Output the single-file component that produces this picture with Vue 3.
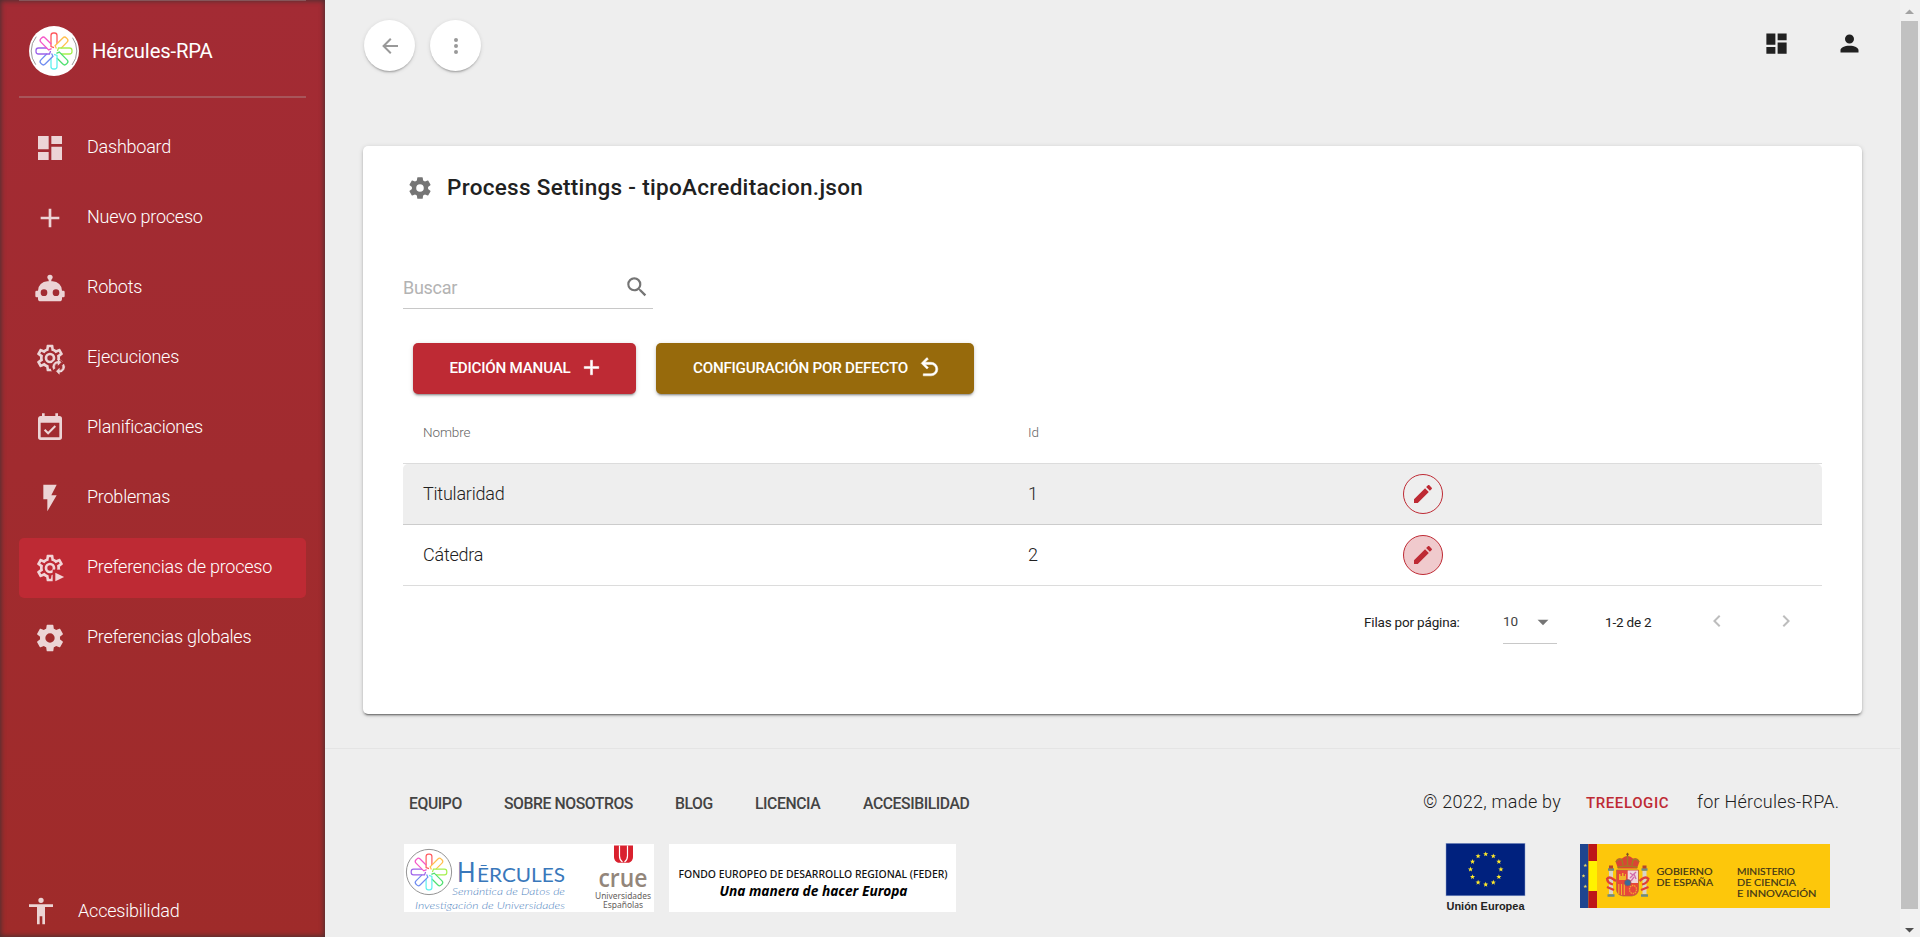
<script setup>
const icons = {
  dashboard: 'M13,3V9H21V3M13,21H21V11H13M3,21H11V15H3M3,13H11V3H3V13Z',
  plus: 'M19,13H13V19H11V13H5V11H11V5H13V11H19V13Z',
  robot: 'M12,2A2,2 0 0,1 14,4C14,4.74 13.6,5.39 13,5.73V7H14A7,7 0 0,1 21,14H22A1,1 0 0,1 23,15V18A1,1 0 0,1 22,19H21V20A2,2 0 0,1 19,22H5A2,2 0 0,1 3,20V19H2A1,1 0 0,1 1,18V15A1,1 0 0,1 2,14H3A7,7 0 0,1 10,7H11V5.73C10.4,5.39 10,4.74 10,4A2,2 0 0,1 12,2M7.5,13A2.5,2.5 0 0,0 5,15.5A2.5,2.5 0 0,0 7.5,18A2.5,2.5 0 0,0 10,15.5A2.5,2.5 0 0,0 7.5,13M16.5,13A2.5,2.5 0 0,0 14,15.5A2.5,2.5 0 0,0 16.5,18A2.5,2.5 0 0,0 19,15.5A2.5,2.5 0 0,0 16.5,13Z',
  cog: 'M12,15.5A3.5,3.5 0 0,1 8.5,12A3.5,3.5 0 0,1 12,8.5A3.5,3.5 0 0,1 15.5,12A3.5,3.5 0 0,1 12,15.5M19.43,12.97C19.47,12.65 19.5,12.33 19.5,12C19.5,11.67 19.47,11.34 19.43,11L21.54,9.37C21.73,9.22 21.78,8.95 21.66,8.73L19.66,5.27C19.54,5.05 19.27,4.96 19.05,5.05L16.56,6.05C16.04,5.66 15.5,5.32 14.87,5.07L14.5,2.42C14.46,2.18 14.25,2 14,2H10C9.75,2 9.54,2.18 9.5,2.42L9.13,5.07C8.5,5.32 7.96,5.66 7.44,6.05L4.95,5.05C4.73,4.96 4.46,5.05 4.34,5.27L2.34,8.73C2.21,8.95 2.27,9.22 2.46,9.37L4.57,11C4.53,11.34 4.5,11.67 4.5,12C4.5,12.33 4.53,12.65 4.57,12.97L2.46,14.63C2.27,14.78 2.21,15.05 2.34,15.27L4.34,18.73C4.46,18.95 4.73,19.03 4.95,18.95L7.44,17.94C7.96,18.34 8.5,18.68 9.13,18.93L9.5,21.58C9.54,21.82 9.75,22 10,22H14C14.25,22 14.46,21.82 14.5,21.58L14.87,18.93C15.5,18.67 16.04,18.34 16.56,17.94L19.05,18.95C19.27,19.03 19.54,18.95 19.66,18.73L21.66,15.27C21.78,15.05 21.73,14.78 21.54,14.63L19.43,12.97Z',
  cogOutline: 'M12,8A4,4 0 0,1 16,12A4,4 0 0,1 12,16A4,4 0 0,1 8,12A4,4 0 0,1 12,8M12,10A2,2 0 0,0 10,12A2,2 0 0,0 12,14A2,2 0 0,0 14,12A2,2 0 0,0 12,10M10,22C9.75,22 9.54,21.82 9.5,21.58L9.13,18.93C8.5,18.68 7.96,18.34 7.44,17.94L4.95,18.95C4.73,19.03 4.46,18.95 4.34,18.73L2.34,15.27C2.21,15.05 2.27,14.78 2.46,14.63L4.57,12.97L4.5,12L4.57,11L2.46,9.37C2.27,9.22 2.21,8.95 2.34,8.73L4.34,5.27C4.46,5.05 4.73,4.96 4.95,5.05L7.44,6.05C7.96,5.66 8.5,5.32 9.13,5.07L9.5,2.42C9.54,2.18 9.75,2 10,2H14C14.25,2 14.46,2.18 14.5,2.42L14.87,5.07C15.5,5.32 16.04,5.66 16.56,6.05L19.05,5.05C19.27,4.96 19.54,5.05 19.66,5.27L21.66,8.73C21.79,8.95 21.73,9.22 21.54,9.37L19.43,11L19.5,12L19.43,13L21.54,14.63C21.73,14.78 21.78,15.05 21.66,15.27L19.66,18.73C19.54,18.95 19.27,19.03 19.05,18.95L16.56,17.94C16.04,18.34 15.5,18.67 14.87,18.93L14.5,21.58C14.46,21.82 14.25,22 14,22H10M11.25,4L10.88,6.61C9.68,6.86 8.62,7.5 7.85,8.39L5.44,7.35L4.69,8.65L6.8,10.2C6.4,11.37 6.4,12.64 6.8,13.8L4.68,15.36L5.43,16.66L7.86,15.62C8.63,16.5 9.68,17.14 10.87,17.38L11.24,20H12.76L13.13,17.39C14.32,17.14 15.37,16.5 16.14,15.62L18.57,16.66L19.32,15.36L17.2,13.81C17.6,12.64 17.6,11.37 17.2,10.2L19.31,8.65L18.56,7.35L16.15,8.39C15.38,7.5 14.32,6.86 13.12,6.62L12.75,4H11.25Z',
  calendar: 'M19,19H5V8H19M19,3H18V1H16V3H8V1H6V3H5C3.89,3 3,3.9 3,5V19A2,2 0 0,0 5,21H19A2,2 0 0,0 21,19V5A2,2 0 0,0 19,3M16.53,11.06L15.47,10L10.59,14.88L8.47,12.76L7.41,13.82L10.59,17L16.53,11.06Z',
  flash: 'M7,2V13H10V22L17,10H13L17,2H7Z',
  human: 'M21,9H15V22H13V16H11V22H9V9H3V7H21M12,2A2,2 0 0,1 14,4A2,2 0 0,1 12,6A2,2 0 0,1 10,4A2,2 0 0,1 12,2Z',
  account: 'M12,4A4,4 0 0,1 16,8A4,4 0 0,1 12,12A4,4 0 0,1 8,8A4,4 0 0,1 12,4M12,14C16.42,14 20,15.79 20,18V20H4V18C4,15.79 7.58,14 12,14Z',
  back: 'M20,11V13H8L13.5,18.5L12.08,19.92L4.16,12L12.08,4.08L13.5,5.5L8,11H20Z',
  dots: 'M12,16A2,2 0 0,1 14,18A2,2 0 0,1 12,20A2,2 0 0,1 10,18A2,2 0 0,1 12,16M12,10A2,2 0 0,1 14,12A2,2 0 0,1 12,14A2,2 0 0,1 10,12A2,2 0 0,1 12,10M12,4A2,2 0 0,1 14,6A2,2 0 0,1 12,8A2,2 0 0,1 10,6A2,2 0 0,1 12,4Z',
  magnify: 'M9.5,3A6.5,6.5 0 0,1 16,9.5C16,11.11 15.41,12.59 14.44,13.73L14.71,14H15.5L20.5,19L19,20.5L14,15.5V14.71L13.73,14.44C12.59,15.41 11.11,16 9.5,16A6.5,6.5 0 0,1 3,9.5A6.5,6.5 0 0,1 9.5,3M9.5,5C7,5 5,7 5,9.5C5,12 7,14 9.5,14C12,14 14,12 14,9.5C14,7 12,5 9.5,5Z',
  undo: 'M13.5,7A6.5,6.5 0 0,1 20,13.5A6.5,6.5 0 0,1 13.5,20H6V18H13.5C16,18 18,16 18,13.5C18,11 16,9 13.5,9H7.83L10.91,12.09L9.5,13.5L4,8L9.5,2.5L10.92,3.91L7.83,7H13.5Z',
  pencil: 'M20.71,7.04C21.1,6.65 21.1,6 20.71,5.63L18.37,3.29C18,2.9 17.35,2.9 16.96,3.29L15.12,5.12L18.87,8.87M3,17.25V21H6.75L17.81,9.93L14.06,6.18L3,17.25Z',
  left: 'M15.41,16.58L10.83,12L15.41,7.41L14,6L8,12L14,18L15.41,16.58Z',
  right: 'M8.59,16.58L13.17,12L8.59,7.41L10,6L16,12L10,18L8.59,16.58Z',
  caret: 'M7,10L12,15L17,10H7Z',
}
const nav = [
  { label: 'Dashboard', icon: 'dashboard' },
  { label: 'Nuevo proceso', icon: 'plus' },
  { label: 'Robots', icon: 'robot' },
  { label: 'Ejecuciones', icon: 'cogOutline', extra: 'sync' },
  { label: 'Planificaciones', icon: 'calendar' },
  { label: 'Problemas', icon: 'flash' },
  { label: 'Preferencias de proceso', icon: 'cogOutline', extra: 'play', active: true },
  { label: 'Preferencias globales', icon: 'cog' },
]
const petals = ['#ff5a5f', '#ffbf4d', '#a5f04e', '#4fe070', '#5ff0ee', '#6f8cf0', '#9d62ea', '#f556c8']
const rows = [
  { name: 'Titularidad', id: 1, hover: true },
  { name: 'Cátedra', id: 2 },
]
const links = [
  ['EQUIPO', 'w1'], ['SOBRE NOSOTROS', 'w2'], ['BLOG', 'w3'], ['LICENCIA', 'w4'], ['ACCESIBILIDAD', 'w5'],
]
const star = (cx, cy, r) => {
  const p = []
  for (let i = 0; i < 10; i++) {
    const q = i % 2 ? r * 0.42 : r
    const a = (i * Math.PI) / 5 - Math.PI / 2
    p.push((cx + q * Math.cos(a)).toFixed(2) + ',' + (cy + q * Math.sin(a)).toFixed(2))
  }
  return p.join(' ')
}
const euStars = Array.from({ length: 12 }, (_, i) => {
  const a = (i * Math.PI) / 6
  return star(39.7 + 15.2 * Math.sin(a), 26.3 - 15.2 * Math.cos(a), 2.7)
})
</script>

<template>
  <div class="page">
    <aside class="sidebar">
      <div class="line top"></div>
      <div class="brand">
        <svg class="logo" viewBox="-25 -25 50 50">
          <circle r="25" fill="#fff" />
          <circle r="22.8" fill="none" stroke="#999" stroke-width="1" stroke-dasharray="30 41.6" stroke-dashoffset="15" />
          <g fill="none" stroke-width="1.3">
            <path v-for="(c, i) in petals" :key="c" :stroke="c" :transform="`rotate(${i * 45})`" d="M3,-7V-15.5Q3,-18 0.5,-18H-0.5Q-3,-18 -3,-15.5V-4.5L0,-3.4" />
          </g>
        </svg>
        <span class="brand-name">Hércules-RPA</span>
      </div>
      <div class="line"></div>
      <nav class="nav">
        <div v-for="n in nav" :key="n.label" class="item" :class="{ active: n.active }">
          <svg class="nav-icon" viewBox="0 0 24 24">
            <mask :id="'cut-' + n.extra">
              <rect width="24" height="24" fill="#fff" />
              <circle v-if="n.extra === 'sync'" cx="18" cy="19" r="5.6" fill="#000" />
              <path v-if="n.extra === 'play'" d="M14,13.2H24V24H14Z" fill="#000" />
            </mask>
            <path :d="icons[n.icon]" :mask="n.extra ? `url(#cut-${n.extra})` : null" />
            <g v-if="n.extra === 'sync'" stroke="currentColor" stroke-width=".35">
              <path d="M18,14.5V13L20.25,15.25L18,17.5V16A2.5,2.5 0 0,0 15.5,18.5C15.5,18.9 15.6,19.3 15.76,19.62L14.67,20.71A4,4 0 0,1 18,14.5Z" />
              <path d="M19,22.7V24.2L16.75,21.95L19,19.7V21.2A2.5,2.5 0 0,0 21.5,18.7C21.5,18.3 21.4,17.9 21.24,17.58L22.33,16.49A4,4 0 0,1 19,22.7Z" />
            </g>
            <path v-if="n.extra === 'play'" d="M16,15.5V22L22.6,18.75Z" />
          </svg>
          <span>{{ n.label }}</span>
        </div>
      </nav>
      <div class="access">
        <svg class="nav-icon" viewBox="0 0 24 24"><path :d="icons.human" /></svg>
        <span>Accesibilidad</span>
      </div>
    </aside>

    <div class="content">
      <header class="toolbar">
        <button class="round"><svg viewBox="0 0 24 24"><path :d="icons.back" /></svg></button>
        <button class="round"><svg viewBox="0 0 24 24"><path :d="icons.dots" /></svg></button>
        <div class="tools">
          <svg viewBox="0 0 24 24"><path :d="icons.dashboard" /></svg>
          <svg viewBox="0 0 24 24"><path :d="icons.account" /></svg>
        </div>
      </header>

      <main class="card">
        <div class="title">
          <svg viewBox="0 0 24 24"><path :d="icons.cog" /></svg>
          <h1>Process Settings - tipoAcreditacion.json</h1>
        </div>
        <div class="search">
          <span>Buscar</span>
          <svg viewBox="0 0 24 24"><path :d="icons.magnify" /></svg>
        </div>
        <div class="buttons">
          <button class="btn red"><span>EDICIÓN MANUAL</span><svg viewBox="0 0 24 24"><path :d="icons.plus" /></svg></button>
          <button class="btn gold"><span>CONFIGURACIÓN POR DEFECTO</span><svg viewBox="0 0 24 24"><path :d="icons.undo" /></svg></button>
        </div>
        <div class="table">
          <div class="tr head"><span>Nombre</span><span>Id</span><span></span></div>
          <div v-for="r in rows" :key="r.id" class="tr" :class="{ hover: r.hover }">
            <span>{{ r.name }}</span><span>{{ r.id }}</span>
            <button class="edit" :class="{ filled: !r.hover }"><svg viewBox="0 0 24 24"><path :d="icons.pencil" /></svg></button>
          </div>
        </div>
        <div class="pager">
          <span class="per">Filas por página:</span>
          <div class="select"><span>10</span><svg viewBox="0 0 24 24"><path :d="icons.caret" /></svg></div>
          <span class="range">1-2 de 2</span>
          <svg class="chev" viewBox="0 0 24 24"><path :d="icons.left" /></svg>
          <svg class="chev next" viewBox="0 0 24 24"><path :d="icons.right" /></svg>
        </div>
      </main>

      <footer class="footer">
        <div class="foot-row">
          <nav class="links"><a v-for="l in links" :key="l[0]" :class="l[1]">{{ l[0] }}</a></nav>
          <div class="copy"><span class="c1">© 2022, made by</span><a>TREELOGIC</a><span class="c2">for Hércules-RPA.</span></div>
        </div>
        <div class="logos">
          <svg width="250" height="68" viewBox="0 0 250 68">
            <rect width="250" height="68" fill="#fff" />
            <g transform="translate(25 28)">
              <circle r="22.6" fill="none" stroke="#888" stroke-width="0.9" />
              <g fill="none" stroke-width="1.2">
                <path v-for="(c, i) in petals" :key="c" :stroke="c" :transform="`rotate(${i * 45})`" d="M2.9,-7V-15.5Q2.9,-17.8 .5,-17.8H-.5Q-2.9,-17.8 -2.9,-15.5V-4.5L0,-3.4" />
              </g>
            </g>
            <g font-family="Lato, sans-serif" fill="#3978bb">
              <text x="53" y="37.5" font-size="26" textLength="18.5" lengthAdjust="spacingAndGlyphs">H</text>
              <text x="73" y="37.5" font-size="19.5" textLength="88" lengthAdjust="spacingAndGlyphs">ĒRCULES</text>
            </g>
            <g font-family="Lato, sans-serif" font-style="italic" font-weight="300" fill="#5587c2" font-size="10.6">
              <text x="48" y="51" textLength="113" lengthAdjust="spacingAndGlyphs">Semántica de Datos de</text>
              <text x="11" y="64.8" textLength="150" lengthAdjust="spacingAndGlyphs">Investigación de Universidades</text>
            </g>
            <path d="M210,1.5H229V13Q229,17 225,18.7H214Q210,17 210,13Z" fill="#d9212e" />
            <path d="M215.5,1.5V12Q215.5,16 218.5,18M223.5,1.5V12Q223.5,16 220.5,18" fill="none" stroke="#fff" stroke-width="1.2" />
            <text x="194.5" y="42.5" font-family="Open Sans, sans-serif" font-weight="600" font-size="25" fill="#93867b" textLength="49" lengthAdjust="spacingAndGlyphs">crue</text>
            <g font-family="Noto Sans, sans-serif" font-size="9" fill="#65605c">
              <text x="191" y="54.5" textLength="56" lengthAdjust="spacingAndGlyphs">Universidades</text>
              <text x="199" y="64" textLength="40" lengthAdjust="spacingAndGlyphs">Españolas</text>
            </g>
          </svg>
          <svg class="feder" width="287" height="68" viewBox="0 0 287 68">
            <rect width="287" height="68" fill="#fff" />
            <text x="9.5" y="34" font-family="Noto Sans, sans-serif" font-size="10.5" font-weight="500" fill="#111" textLength="269" lengthAdjust="spacingAndGlyphs">FONDO EUROPEO DE DESARROLLO REGIONAL (FEDER)</text>
            <text x="50.5" y="51.5" font-family="Noto Sans, sans-serif" font-size="13.3" font-weight="700" font-style="italic" fill="#000" textLength="188" lengthAdjust="spacingAndGlyphs">Una manera de hacer Europa</text>
          </svg>
          <svg class="eu" width="79" height="76" viewBox="0 0 79 76">
            <rect x="0" y="0.3" width="79" height="52.5" fill="#00217e" stroke="#8da0cc" stroke-width=".5" />
            <polygon v-for="s in euStars" :key="s" :points="s" fill="#ffe92b" />
            <text x="0.5" y="67.3" font-family="Liberation Sans, sans-serif" font-weight="700" font-size="11.3" fill="#222" textLength="78" lengthAdjust="spacingAndGlyphs">Unión Europea</text>
          </svg>
          <svg class="gob" width="250" height="64" viewBox="0 0 250 64">
            <rect width="250" height="64" fill="#fdc70b" />
            <rect width="8.5" height="64" fill="#1f458f" />
            <rect x="8.5" width="8.5" height="64" fill="#bd1619" />
            <rect x="8.5" y="17" width="8.5" height="30" fill="#fff200" />
            <polygon :points="star(5.3, 21.5, 2)" fill="#e9d76b" />
            <polygon :points="star(3.5, 32, 2)" fill="#e9d76b" />
            <polygon :points="star(5.3, 42.5, 2)" fill="#e9d76b" />
            <g>
              <rect x="29" y="27" width="4" height="23" fill="#d9d4c8" /><rect x="62.5" y="27" width="4" height="23" fill="#d9d4c8" />
              <path d="M28,25.5H34M61.5,25.5H67.5M27.5,51.5H34.5M61,51.5H68" stroke="#6b8a86" stroke-width="2.6" />
              <path d="M29,23H33M62.5,23H66.5" stroke="#b4472c" stroke-width="3" />
              <path d="M27,35Q29,32 33,35L36,37M27,34Q27,39 33,40.5M68.5,35Q66,32 62,35L59.5,37M68.5,34Q68,39 62,40.5M27,43L34,46M68.5,43L61,46" fill="none" stroke="#df4038" stroke-width="2.3" />
              <path d="M36.5,26H58.5V45Q58.5,51 52,52H43Q36.5,51 36.5,45Z" fill="#e7473a" stroke="#ad6c3d" stroke-width=".7" />
              <path d="M47.7,26.5H58V39H47.7Z" fill="#efd7dc" />
              <path d="M50,29L53,31L56,28M50,34L54,30L56,35M51,37L54,33" stroke="#d36aaa" stroke-width="1.3" fill="none" />
              <path d="M39,36V30H40.5V32H42V29H43.5V32H45V30H46V36Z" fill="#efb42a" />
              <path d="M38.8,40V50M41.5,40V51M44.3,40V51" stroke="#f0b32b" stroke-width="1.1" />
              <ellipse cx="53" cy="45.5" rx="3.5" ry="4" fill="none" stroke="#f0a62e" stroke-width="1.3" stroke-dasharray="1.5 .8" />
              <circle cx="47.7" cy="38.8" r="3.3" fill="#376b9b" stroke="#ad4d4a" stroke-width=".8" />
              <path d="M38,24.5L35.5,17.5Q37,13 42,14.5Q45,11.5 47.5,12Q50,11.5 53,14.5Q58,13 59.5,17.5L57,24.5Z" fill="#d84534" />
              <path d="M37.5,23.5Q47.5,20.5 57.5,23.5M36,18Q38,14 42,16L43,21M59,18Q57,14 53,16L52,21M47.5,10V21" stroke="#a27b24" stroke-width="1.4" fill="none" />
              <path d="M47.5,8.8V12M46,10.2H49" stroke="#7b4d26" stroke-width=".9" />
            </g>
            <g font-family="Lato, sans-serif" font-size="9.8" fill="#3a3218" stroke="#3a3218" stroke-width=".15">
              <text x="76.5" y="31" textLength="56" lengthAdjust="spacingAndGlyphs">GOBIERNO</text>
              <text x="76.5" y="42" textLength="56.5" lengthAdjust="spacingAndGlyphs">DE ESPAÑA</text>
              <text x="157" y="31" textLength="58" lengthAdjust="spacingAndGlyphs">MINISTERIO</text>
              <text x="157" y="42" textLength="59" lengthAdjust="spacingAndGlyphs">DE CIENCIA</text>
              <text x="157" y="53" textLength="79.5" lengthAdjust="spacingAndGlyphs">E INNOVACIÓN</text>
            </g>
          </svg>
        </div>
      </footer>
    </div>

    <div class="scrollbar">
      <svg viewBox="0 0 20 21"><path d="M5,14L9.5,9.5L14,14Z" fill="#a3a3a3" /></svg>
      <div class="thumb"></div>
      <svg viewBox="0 0 20 28"><path d="M5,19L9.5,23.5L14,19Z" fill="#505050" /></svg>
    </div>
  </div>
</template>

<style>
body { margin: 0; overflow: hidden; background: #eee; }
</style>

<style scoped>
* { box-sizing: border-box; }
.page { display: flex; width: 1920px; height: 937px; font-family: Roboto, sans-serif; background: #eee; overflow: hidden; color: #212121; }
svg { display: block; fill: currentColor; flex: none; overflow: visible; }
button { font-family: inherit; border: 0; padding: 0; margin: 0; }
.sidebar { width: 325px; height: 937px; display: flex; flex-direction: column; padding: 0 19px; background: linear-gradient(#a32b34, #9f2b2a); box-shadow: inset 0 0 5px 1px rgba(45, 50, 50, .75); color: #fff; }
.line { height: 2px; background: rgba(181, 181, 181, .3); flex: none; }
.line.top { height: 1px; }
.brand { height: 95px; display: flex; align-items: center; padding: 5px 0 0 10px; }
.logo { width: 50px; height: 50px; }
.brand-name { font-size: 20.25px; line-height: 30px; margin-left: 13px; letter-spacing: -.15px; }
.nav { padding-top: 20px; display: flex; flex-direction: column; gap: 10px; }
.item { height: 60px; border-radius: 5px; display: flex; align-items: center; padding-left: 15px; font-size: 18px; font-weight: 300; letter-spacing: -.23px; }
.item span { margin-left: 21px; padding-bottom: 4px; }
.item.active { background: #be2a34; }
.nav-icon { width: 32px; height: 32px; color: rgba(255, 255, 255, .8); }
.access { margin-top: auto; height: 54px; display: flex; align-items: center; padding-left: 6px; font-size: 18px; font-weight: 300; letter-spacing: -.2px; }
.access svg { margin-top: 2px; }
.access span { margin-left: 21px; }
.content { width: 1575px; display: flex; flex-direction: column; }
.toolbar { height: 146px; padding: 20px 37px 0 39px; display: flex; gap: 15px; align-items: flex-start; }
.round { width: 51px; height: 51px; border-radius: 50%; background: #fff; color: #999; display: flex; align-items: center; justify-content: center; box-shadow: 0 2px 2px -1px rgba(0, 0, 0, .28), 0 1px 4px rgba(0, 0, 0, .12); }
.round svg { width: 24px; height: 24px; }
.tools { margin-left: auto; display: flex; gap: 46px; padding: 10px 0 0; color: #212121; }
.tools svg { width: 27px; height: 27px; }
.card { width: 1499px; height: 568px; margin-left: 38px; background: #fff; border-radius: 5px; padding: 0 40px; box-shadow: 0 3px 1px -2px rgba(0, 0, 0, .3), 0 2px 2px rgba(0, 0, 0, .2), 0 1px 5px rgba(0, 0, 0, .16); }
.title { display: flex; align-items: center; height: 84px; padding-left: 4px; color: #757575; }
.title svg { width: 26px; height: 26px; }
h1 { margin: 0 0 0 14px; padding-bottom: 2px; font-size: 22.5px; font-weight: 500; color: #212121; letter-spacing: .3px; }
.search { margin-top: 36px; width: 250px; height: 43px; border-bottom: 1px solid #c8c8c8; display: flex; justify-content: space-between; align-items: center; font-size: 18px; color: #b3b3b3; padding: 0 3px 0 0; letter-spacing: -.3px; }
.search svg { width: 26px; height: 26px; color: #757575; }
.buttons { display: flex; gap: 20px; padding: 34px 0 0 10px; }
.btn { height: 51px; border-radius: 5px; color: #fff; display: flex; align-items: center; justify-content: center; font-size: 15.2px; font-weight: 500; letter-spacing: -.24px; box-shadow: 0 3px 1px -2px rgba(0, 0, 0, .2), 0 2px 2px rgba(0, 0, 0, .16), 0 1px 5px rgba(0, 0, 0, .14); }
.btn { padding: 0 0 2px 5px; }
.btn svg { width: 25px; height: 25px; margin-left: 9px; stroke: currentColor; stroke-width: .5; }
.red { width: 223px; background: #be2a34; }
.gold { width: 318px; background: #976a0c; }
.table { width: 1419px; margin-top: 8px; }
.tr { display: grid; grid-template-columns: 605px 375px 1fr; align-items: center; height: 61px; padding-left: 20px; border-bottom: 1px solid #dcdcdc; font-size: 18px; font-weight: 300; color: #212121; }
.tr span { padding-bottom: 2px; letter-spacing: -.22px; }
.tr.head { height: 62px; font-size: 13.5px; color: #666; }
.tr.head span { letter-spacing: -.1px; }
.tr.hover { background: #eee; border-bottom-color: #ccc; border-radius: 5px 5px 0 0; }
.edit { width: 40px; height: 40px; border: 1px solid #be2a34; border-radius: 50%; background: transparent; color: #be2a34; display: flex; align-items: center; justify-content: center; }
.edit svg { width: 24px; height: 24px; }
.filled { background: #f0cacd; }
.pager { display: flex; align-items: flex-start; font-size: 13.5px; padding: 25px 0 0 961px; line-height: 22px; letter-spacing: -.18px; }
.per { width: 139px; white-space: nowrap; }
.select { width: 54px; height: 33px; display: flex; justify-content: space-between; border-bottom: 1px solid #c8c8c8; line-height: 20px; color: #424242; }
.select svg { width: 26px; height: 26px; margin-top: -2px; margin-right: 1px; color: #757575; }
.range { margin-left: 48px; width: 100px; }
.chev { width: 24px; height: 24px; color: #bdbdbd; margin-top: -2px; }
.next { margin-left: 45px; }
.footer { margin-top: 34px; border-top: 1px solid #e4e4e4; height: 189px; }
.foot-row { display: flex; justify-content: space-between; height: 95px; padding: 43px 0 0 84px; }
.links { display: flex; font-size: 15.75px; line-height: 24px; font-weight: 500; color: #444; }
.links a { white-space: nowrap; letter-spacing: -.43px; }
.w1 { width: 95px; } .w2 { width: 171px; } .w3 { width: 80px; } .w4 { width: 108px; } .w5 { width: 120px; }
.copy { display: flex; line-height: 20px; font-size: 18px; font-weight: 300; width: 477px; letter-spacing: .25px; }
.copy span, .copy a { white-space: nowrap; }
.c1 { width: 163px; }
.copy a { width: 111px; font-size: 15px; font-weight: 500; color: #be2a34; letter-spacing: .6px; padding-top: 1px; }
.logos { display: flex; align-items: flex-start; padding-left: 79px; }
.feder { margin-left: 15px; }
.eu { margin-left: 490px; margin-top: -1px; }
.gob { margin-left: 55px; }
.scrollbar { width: 20px; height: 937px; background: #f1f1f1; display: flex; flex-direction: column; }
.thumb { width: 17px; margin-left: 1px; flex: 1; background: #c1c1c1; }
</style>
